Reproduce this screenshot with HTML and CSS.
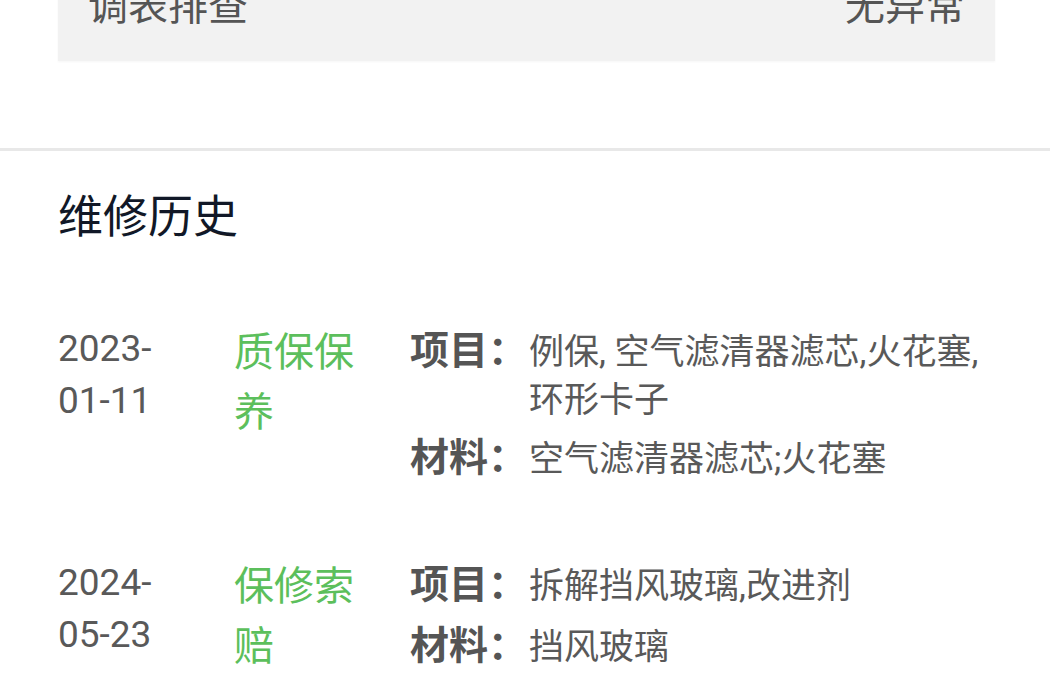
FILE: index.html
```html
<!DOCTYPE html>
<html lang="zh-CN">
<head>
    <meta charset="UTF-8">
    <meta name="viewport" content="width=device-width, initial-scale=1.0">
    <title>维修历史</title>
    <link rel="stylesheet" href="styles.css">
</head>
<body>

    <!-- Inspection summary (scrolled, top rows out of view) -->
    <section class="check-section">
        <div class="check-box">
            <div class="check-row">
                <span class="check-name">调表排查</span>
                <span class="check-result">无异常</span>
            </div>
        </div>
    </section>

    <!-- Repair history -->
    <section class="history-section">
        <h2 class="section-title">维修历史</h2>

        <div class="record">
            <div class="record-date">2023-01-11</div>
            <div class="record-type"><span>质保保养</span></div>
            <div class="record-detail">
                <div class="detail-row">
                    <span class="detail-label">项目：</span>
                    <span class="detail-value">例保, 空气滤清器滤芯,火花塞,环形卡子</span>
                </div>
                <div class="detail-row">
                    <span class="detail-label">材料：</span>
                    <span class="detail-value">空气滤清器滤芯;火花塞</span>
                </div>
            </div>
        </div>

        <div class="record">
            <div class="record-date">2024-05-23</div>
            <div class="record-type"><span>保修索赔</span></div>
            <div class="record-detail">
                <div class="detail-row">
                    <span class="detail-label">项目：</span>
                    <span class="detail-value">拆解挡风玻璃,改进剂</span>
                </div>
                <div class="detail-row">
                    <span class="detail-label">材料：</span>
                    <span class="detail-value">挡风玻璃</span>
                </div>
            </div>
        </div>
    </section>

</body>
</html>
```

FILE: styles.css
```css
/* General page */
body {
    margin: 0;
    font-family: Roboto, "Noto Sans CJK SC", sans-serif;
    background: #fff;
    color: #555;
    overflow: hidden;
}

/* Inspection box */
.check-section {
    padding: 0 55px 87px 58px;
    margin-top: -60px;
    border-bottom: 3px solid #e8e8e8;
}

.check-box {
    background: #f2f2f2;
    padding: 39px 30px 26px;
    box-shadow: 0 1px 2px rgba(0, 0, 0, 0.04);
}

.check-row {
    display: flex;
    justify-content: space-between;
    font-size: 40px;
    line-height: 56px;
    color: #555;
}

/* History section */
.history-section {
    padding: 34px 55px 0 58px;
}

.section-title {
    margin: 0 0 72px;
    font-size: 45px;
    line-height: 66px;
    font-weight: 400;
    color: #111827;
}

.record {
    display: grid;
    grid-template-columns: 176px 176px 1fr;
    align-items: start;
    margin-bottom: 66px;
}

.record-date {
    width: 112px;
    font-size: 37px;
    line-height: 52px;
    color: #595959;
}

.record-type {
    width: 140px;
    font-size: 40px;
    line-height: 60px;
    color: #5cbf5c;
}

.detail-row {
    display: flex;
    align-items: baseline;
    margin-bottom: 5px;
}

.detail-label {
    flex: 0 0 119px;
    font-size: 39px;
    line-height: 56px;
    font-weight: 700;
    color: #555;
}

.detail-value {
    flex: 1;
    font-size: 35px;
    line-height: 48px;
    color: #595959;
}
```
